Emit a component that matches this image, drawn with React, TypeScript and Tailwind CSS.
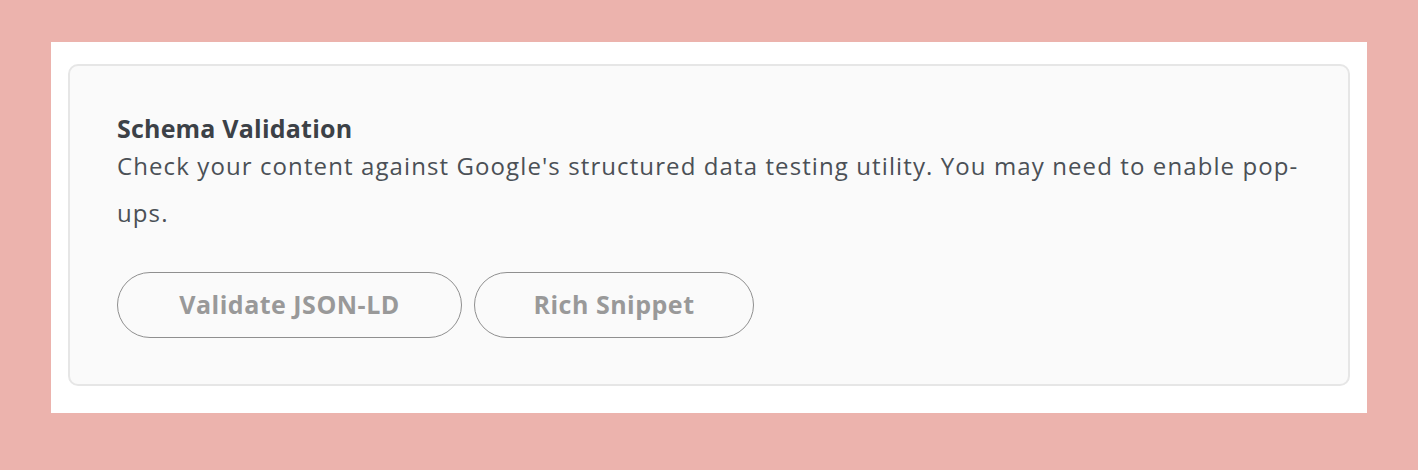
export default function App() {
  return (
    <div className="flex h-[470px] w-full items-start justify-center bg-[#ecb3ad] pt-[42px] font-['Open_Sans',sans-serif]">
      <div className="w-[1316px] bg-white px-[17px] pb-[27px] pt-[22px]">
        <div className="rounded-[10px] border-2 border-[#e6e6e6] bg-[#fafafa] px-[47px] pb-[46px] pt-[48px]">
          <h2 className="text-[25px] font-bold leading-[28px] tracking-[0.2px] text-[#3c4147]">Schema Validation</h2>
          <p className="text-[24px] leading-[47px] tracking-[1.1px] text-[#4b5056]">
            Check your content against Google's structured data testing utility. You may need to enable pop-ups.
          </p>
          <div className="mt-[36px] flex gap-[12px]">
            <button className="h-[66px] w-[345px] rounded-full border-[1.5px] border-[#8f8f8f] text-[25px] font-bold tracking-[0.5px] text-[#999999]">
              Validate JSON-LD
            </button>
            <button className="h-[66px] w-[280px] rounded-full border-[1.5px] border-[#8f8f8f] text-[25px] font-bold tracking-[0.5px] text-[#999999]">
              Rich Snippet
            </button>
          </div>
        </div>
      </div>
    </div>
  );
}
